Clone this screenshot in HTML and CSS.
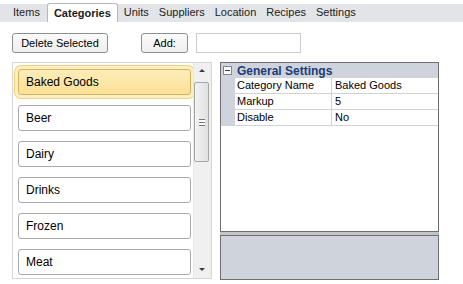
FILE: index.html
```html
<!DOCTYPE html>
<html lang="en">
<head>
    <meta charset="UTF-8">
    <title>Categories</title>
    <link rel="stylesheet" href="styles.css">
</head>
<body>
    <div class="tabs">
        <div class="tab">Items</div>
        <div class="tab active">Categories</div>
        <div class="tab">Units</div>
        <div class="tab">Suppliers</div>
        <div class="tab">Location</div>
        <div class="tab">Recipes</div>
        <div class="tab">Settings</div>
    </div>
    <div class="toolbar">
        <button class="btn btn-delete">Delete Selected</button>
        <button class="btn btn-add">Add:</button>
        <input class="add-input" type="text">
    </div>
    <div class="main">
        <div class="listbox">
            <div class="list-items">
                <div class="list-item selected">Baked Goods</div>
                <div class="list-item">Beer</div>
                <div class="list-item">Dairy</div>
                <div class="list-item">Drinks</div>
                <div class="list-item">Frozen</div>
                <div class="list-item">Meat</div>
            </div>
            <div class="scrollbar">
                <div class="arrow arrow-up"></div>
                <div class="track">
                    <div class="thumb"><span class="grip"></span></div>
                </div>
                <div class="arrow arrow-down"></div>
            </div>
        </div>
        <div class="props">
            <div class="grid">
                <div class="grid-header">
                    <span class="toggle"></span>
                    <span class="group-name">General Settings</span>
                </div>
                <div class="grid-row">
                    <div class="gutter"></div>
                    <div class="prop-name">Category Name</div>
                    <div class="prop-value">Baked Goods</div>
                </div>
                <div class="grid-row">
                    <div class="gutter"></div>
                    <div class="prop-name">Markup</div>
                    <div class="prop-value">5</div>
                </div>
                <div class="grid-row">
                    <div class="gutter"></div>
                    <div class="prop-name">Disable</div>
                    <div class="prop-value">No</div>
                </div>
            </div>
            <div class="splitter"></div>
            <div class="description"></div>
        </div>
    </div>
</body>
</html>
```

FILE: styles.css
```css
body {
    margin: 0;
    padding: 0;
    background-color: #ffffff;
    font-family: "Liberation Sans", Arial, sans-serif;
    font-size: 11px;
    color: #000000;
}
.tabs {
    display: flex;
    align-items: flex-end;
    height: 18px;
    margin-top: 4px;
    padding-left: 8px;
    background-color: #e2e4e8;
}
.tab {
    padding: 0 5px;
    height: 18px;
    line-height: 17px;
    color: #1b1b1b;
}
.tab.active {
    height: 18px;
    margin-top: -1px;
    padding: 0 6px;
    margin: 0 1px 0 2px;
    background-color: #ffffff;
    border: 1px solid #b4b8bf;
    border-bottom: none;
    border-radius: 3px 3px 0 0;
    font-weight: bold;
    line-height: 18px;
}
.toolbar {
    display: flex;
    align-items: center;
    margin-top: 11px;
    padding-left: 12px;
}
.btn {
    height: 20px;
    padding: 0;
    font-family: "Liberation Sans", Arial, sans-serif;
    font-size: 11px;
    color: #000000;
    border: 1px solid #8c8f94;
    border-radius: 3px;
    background: linear-gradient(#fbfbfb, #eeeeee);
}
.btn-delete {
    width: 96px;
}
.btn-add {
    width: 47px;
    margin-left: 33px;
}
.add-input {
    box-sizing: border-box;
    width: 105px;
    height: 20px;
    margin-left: 8px;
    border: 1px solid #c8ccd2;
    padding: 0;
}
.main {
    display: flex;
    margin-top: 9px;
    padding-left: 12px;
}
.listbox {
    display: flex;
    box-sizing: border-box;
    width: 200px;
    height: 217px;
    border: 1px solid #d6d6d6;
}
.list-items {
    flex: 1;
    display: flex;
    flex-direction: column;
    gap: 10px;
    padding: 6px 0 0 5px;
    overflow: hidden;
}
.list-item {
    box-sizing: border-box;
    width: 173px;
    height: 26px;
    flex-shrink: 0;
    padding-left: 7px;
    line-height: 25px;
    font-size: 12px;
    border: 1px solid #a9abae;
    border-radius: 3px;
    background-color: #ffffff;
}
.list-item.selected {
    border-color: #d9b35c;
    background: linear-gradient(#fdedb8, #fbe096);
    box-shadow: 0 0 0 3px #fdefc3, 0 0 0 4px #f0d382;
}
.scrollbar {
    display: flex;
    flex-direction: column;
    width: 17px;
    background-color: #f0f0f0;
    border-left: 1px solid #e8e8e8;
}
.arrow {
    height: 17px;
    position: relative;
}
.arrow::after {
    content: "";
    position: absolute;
    left: 5px;
    border-left: 3px solid transparent;
    border-right: 3px solid transparent;
}
.arrow-up::after {
    top: 6px;
    border-bottom: 3px solid #3c3c3c;
}
.arrow-down::after {
    top: 7px;
    border-top: 3px solid #3c3c3c;
}
.track {
    flex: 1;
    padding-top: 2px;
}
.thumb {
    display: flex;
    align-items: center;
    justify-content: center;
    box-sizing: border-box;
    width: 15px;
    height: 80px;
    border: 1px solid #a6a6a6;
    border-radius: 2px;
    background: linear-gradient(to right, #f3f3f3, #e0e0e0);
}
.grip {
    width: 6px;
    height: 5px;
    border-top: 1px solid #777777;
    border-bottom: 1px solid #777777;
    background: linear-gradient(#ffffff 2px, #777777 2px, #777777 3px, #ffffff 3px);
}
.props {
    display: flex;
    flex-direction: column;
    width: 219px;
    margin-left: 8px;
}
.grid {
    box-sizing: border-box;
    height: 170px;
    border: 1px solid #6e6e6e;
    background-color: #ffffff;
}
.grid-header {
    display: flex;
    align-items: center;
    height: 15px;
    background-color: #cfd3dc;
}
.toggle {
    box-sizing: border-box;
    position: relative;
    width: 9px;
    height: 9px;
    margin-left: 2px;
    border: 1px solid #7f8796;
    background-color: #ffffff;
}
.toggle::after {
    content: "";
    position: absolute;
    left: 1px;
    top: 3px;
    width: 5px;
    height: 1px;
    background-color: #3b3b3b;
}
.group-name {
    margin-left: 5px;
    font-size: 12px;
    font-weight: bold;
    color: #1d3c78;
}
.grid-row {
    display: flex;
    height: 16px;
    line-height: 15px;
}
.gutter {
    width: 14px;
    background-color: #cfd3dc;
}
.prop-name {
    width: 94px;
    padding-left: 2px;
    border-right: 1px solid #d2d2d2;
    border-bottom: 1px solid #d2d2d2;
}
.prop-value {
    flex: 1;
    padding-left: 3px;
    border-bottom: 1px solid #d2d2d2;
}
.splitter {
    height: 3px;
    background-color: #c4c4c4;
}
.description {
    box-sizing: border-box;
    height: 45px;
    border: 1px solid #6e6e6e;
    background-color: #cfd3dc;
}
```
